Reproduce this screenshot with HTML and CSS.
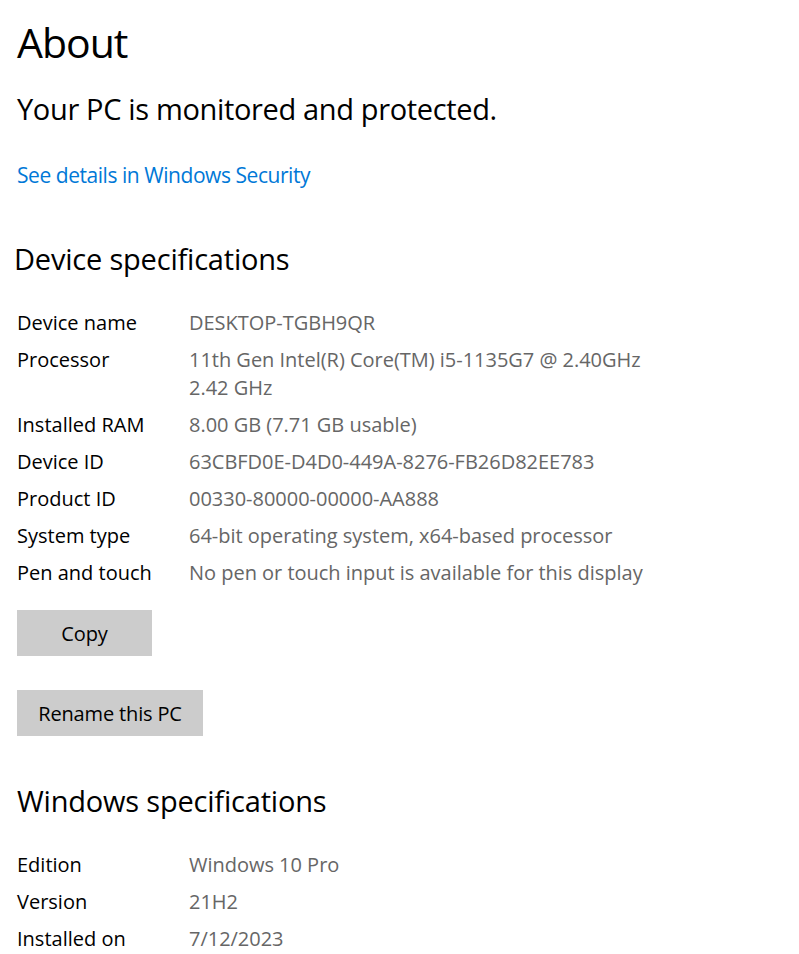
FILE: index.html
```html
<!DOCTYPE html>
<html>
<head>
<meta charset="utf-8">
<link rel="stylesheet" href="styles.css">
</head>
<body>
<main class="page">
  <h1 class="title">About</h1>
  <p class="status">Your PC is monitored and protected.</p>
  <a class="link" href="#">See details in Windows Security</a>

  <section class="device">
    <h2 class="heading device-heading">Device specifications</h2>
    <div class="specs">
      <div class="label">Device name</div><div class="value">DESKTOP-TGBH9QR</div>
      <div class="label">Processor</div><div class="value">11th Gen Intel(R) Core(TM) i5-1135G7 @ 2.40GHz<br>2.42 GHz</div>
      <div class="label">Installed RAM</div><div class="value">8.00 GB (7.71 GB usable)</div>
      <div class="label">Device ID</div><div class="value">63CBFD0E-D4D0-449A-8276-FB26D82EE783</div>
      <div class="label">Product ID</div><div class="value">00330-80000-00000-AA888</div>
      <div class="label">System type</div><div class="value">64-bit operating system, x64-based processor</div>
      <div class="label">Pen and touch</div><div class="value">No pen or touch input is available for this display</div>
    </div>
  </section>

  <div class="buttons">
    <button class="btn btn-copy">Copy</button>
    <button class="btn btn-rename">Rename this PC</button>
  </div>

  <section class="windows">
    <h2 class="heading win-heading">Windows specifications</h2>
    <div class="specs">
      <div class="label">Edition</div><div class="value">Windows 10 Pro</div>
      <div class="label">Version</div><div class="value">21H2</div>
      <div class="label">Installed on</div><div class="value">7/12/2023</div>
    </div>
  </section>
</main>
</body>
</html>
```

FILE: styles.css
```css
html, body {
  margin: 0;
  padding: 0;
  background: #ffffff;
}
body {
  font-family: "Open Sans", "Noto Sans", sans-serif;
  color: #000;
}
.page {
  padding: 14px 0 0 17px;
  display: flex;
  flex-direction: column;
  align-items: flex-start;
}
.title {
  margin: 0;
  font-size: 41px;
  line-height: 56px;
  font-weight: 400;
  letter-spacing: -1px;
}
.status {
  margin: 19px 0 0 0;
  font-size: 29px;
  line-height: 40px;
  letter-spacing: -0.35px;
}
.link {
  margin-top: 32px;
  font-size: 21px;
  line-height: 28px;
  color: #0078d7;
  text-decoration: none;
  letter-spacing: -0.45px;
}
.heading {
  margin: 0;
  font-weight: 400;
  line-height: 40px;
  font-size: 29px;
  letter-spacing: -0.2px;
}
.device {
  margin-top: 50px;
}
.device-heading {
  margin-left: -3px;
}
.specs {
  display: grid;
  grid-template-columns: 172px auto;
  row-gap: 9px;
  margin-top: 30px;
  font-size: 20px;
  line-height: 28px;
}
.label { color: #000; white-space: nowrap; letter-spacing: 0; }
.value { color: #666666; white-space: nowrap; letter-spacing: -0.02px; }
.buttons {
  display: flex;
  flex-direction: column;
  align-items: flex-start;
  gap: 34px;
  margin-top: 23px;
}
.btn {
  border: none;
  background: #cccccc;
  color: #000;
  font-family: inherit;
  font-size: 20px;
  letter-spacing: -0.15px;
  height: 46px;
  padding: 0;
}
.btn-copy { width: 135px; }
.btn-rename { width: 186px; }
.windows {
  margin-top: 45px;
}
```
